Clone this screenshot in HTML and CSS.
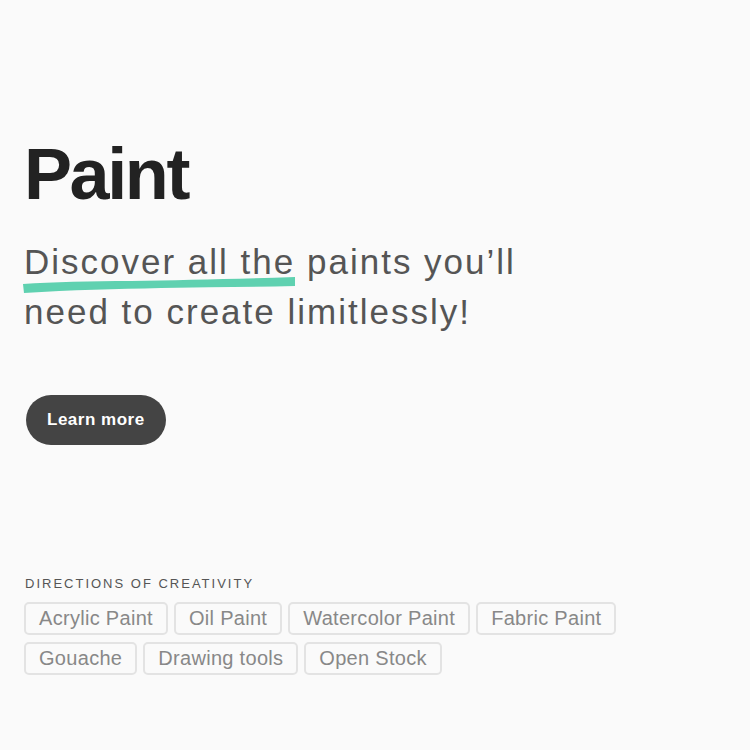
FILE: index.html
```html
<!DOCTYPE html>
<html lang="en">

<head>
  <meta charset="UTF-8">
  <meta name="viewport" content="width=device-width, initial-scale=1.0">
  <title>Paint</title>
  <link rel="stylesheet" href="styles.css">
</head>

<body>
  <main class="hero">
    <h1 class="hero-title">Paint</h1>
    <p class="hero-lead">
      <span class="brush">Discover all the
        <svg class="brush-stroke" viewBox="0 0 276 20" preserveAspectRatio="none" aria-hidden="true">
          <path d="M1 9 C30 7 70 6 110 6 C160 5 215 4 275 2 L275 11 C230 12 185 12 140 13 C95 14 50 15 2 18 Z" fill="#5fd1b0"/>
        </svg>
      </span> paints you’ll<br>
      need to create limitlessly!
    </p>
    <a class="button" href="#">Learn more</a>
  </main>

  <section class="directions">
    <h2 class="directions-title">Directions of creativity</h2>
    <ul class="tags">
      <li class="tag">Acrylic Paint</li>
      <li class="tag">Oil Paint</li>
      <li class="tag">Watercolor Paint</li>
      <li class="tag">Fabric Paint</li>
      <li class="tag">Gouache</li>
      <li class="tag">Drawing tools</li>
      <li class="tag">Open Stock</li>
    </ul>
  </section>
</body>

</html>
```

FILE: styles.css
```css
body {
  margin: 0;
  padding: 0 24px;
  font-family: "Liberation Sans", Arial, sans-serif;
  background: #fafafa;
  color: #222;
}

.hero {
  padding-top: 134px;
}

.hero-title {
  margin: 0;
  font-size: 72px;
  line-height: 80px;
  letter-spacing: -2.4px;
  color: #222;
}

.hero-lead {
  margin: 23px 0 0;
  font-size: 35px;
  line-height: 50px;
  letter-spacing: 2px;
  color: #555;
}

.brush {
  position: relative;
  display: inline-block;
}

.brush-stroke {
  position: absolute;
  left: -2px;
  bottom: -8px;
  width: 274px;
  height: 20px;
  z-index: -1;
}

.button {
  display: inline-block;
  margin: 58px 0 0 2px;
  padding: 0 21px;
  height: 50px;
  line-height: 50px;
  border-radius: 25px;
  background: #444;
  color: #fff;
  font-size: 17px;
  font-weight: bold;
  letter-spacing: 0.5px;
  text-decoration: none;
}

.directions {
  margin-top: 131px;
}

.directions-title {
  margin: 0 0 11px 1px;
  font-size: 13px;
  font-weight: normal;
  text-transform: uppercase;
  letter-spacing: 2px;
  color: #555;
}

.tags {
  display: flex;
  flex-wrap: wrap;
  gap: 7px 6px;
  max-width: 620px;
  margin: 0;
  padding: 0;
  list-style: none;
}

.tag {
  padding: 0 13px;
  height: 29px;
  line-height: 29px;
  border: 2px solid #e3e3e3;
  border-radius: 5px;
  font-size: 20px;
  letter-spacing: 0.3px;
  color: #888;
}
```
